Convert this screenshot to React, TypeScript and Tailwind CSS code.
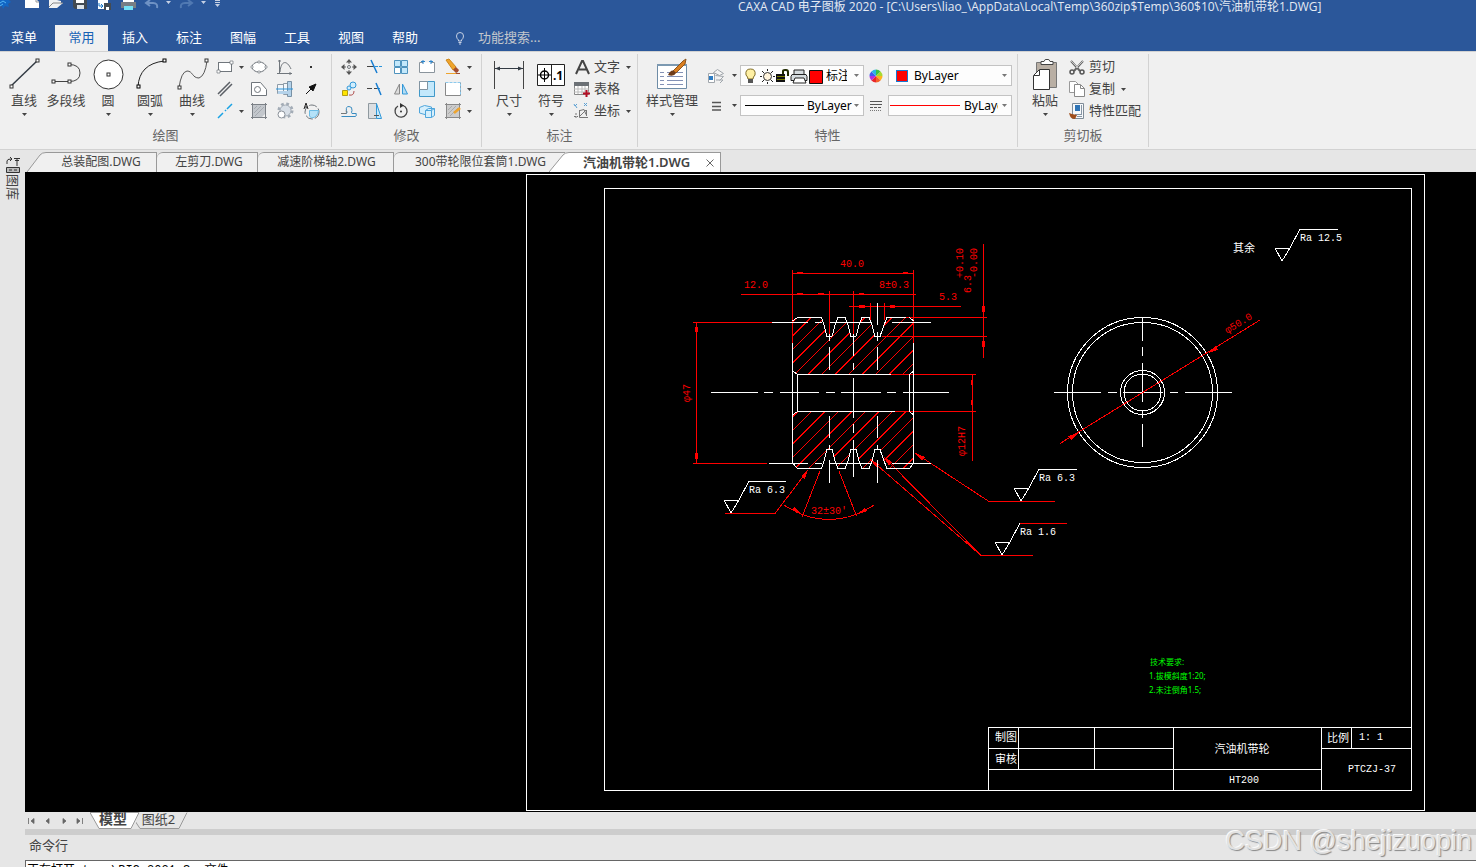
import React from "react";

type Kids = { children?: React.ReactNode };

const Ico = ({ children, w = 20, h = 20 }: Kids & { w?: number; h?: number }) => (
  <svg width={w} height={h} viewBox={`0 0 ${w} ${h}`} fill="none" stroke="#70767c" strokeWidth="1" aria-hidden="true" className="block shrink-0">
    {children}
  </svg>
);

const Caret = ({ color = "#444" }: { color?: string }) => (
  <svg width="5" height="3" viewBox="0 0 5 3" aria-hidden="true" className="block shrink-0">
    <path d="M0 0h5L2.500 3z" fill={color} />
  </svg>
);

const node = (x: number, y: number, color = "#333") => (
  <rect x={x - 1.5} y={y - 1.5} width="3" height="3" fill="#fff" stroke={color} />
);

function Big({ label, width = "w-[42px]", caret = true, children }: Kids & { label: string; width?: string; caret?: boolean }) {
  return (
    <button type="button" className={`flex ${width} flex-col items-center`}>
      <span className="flex h-9 items-center justify-center">{children}</span>
      <span className="text-[13px] leading-4 whitespace-nowrap">{label}</span>
      <span className="flex h-3 items-center">{caret && <Caret />}</span>
    </button>
  );
}

function Tool({ label, caret = false, children }: Kids & { label: string; caret?: boolean }) {
  return (
    <button type="button" aria-label={label} className="flex h-[22px] items-center gap-1 pl-[2px]">
      {children}
      {caret && <Caret />}
    </button>
  );
}

function Row({ label, caret = false, children }: Kids & { label: string; caret?: boolean }) {
  return (
    <button type="button" className="flex h-[22px] items-center gap-[2px] whitespace-nowrap text-[13px] leading-4">
      {children}
      <span className="pr-1 pb-[2px]">{label}</span>
      {caret && <Caret />}
    </button>
  );
}

function Group({ title, pad, children }: Kids & { title: string; pad: string }) {
  return (
    <section className="my-[2px] flex shrink-0 flex-col border-r border-[#d2d2d2] pt-[2px] text-[#444]">
      <div className={`flex h-[66px] ${pad}`}>{children}</div>
      <h2 className="mt-1 text-center text-[13px] leading-[18px] text-[#666]">{title}</h2>
    </section>
  );
}

function Combo({ label, value, lead, selectClass }: { label: string; value: string; lead: React.ReactNode; selectClass: string }) {
  return (
    <div className="flex h-[21px] w-[124px] items-center border border-[#c3c3c3] bg-[#fdfdfd]">
      {lead}
      <select aria-label={label} className={`${selectClass} min-w-0 appearance-none overflow-hidden bg-transparent text-[12px] leading-[19px] text-black outline-none`}>
        <option>{value}</option>
      </select>
      <span className="ml-auto pr-1"><Caret color="#777" /></span>
    </div>
  );
}

function TitleIcons() {
  return (
    <svg width="225" height="12" viewBox="0 0 225 12" fill="none" aria-hidden="true" className="block shrink-0">
      <path d="M0 0h9l2 2-3 2 1 3-4-1-2 3-1-3H0z" fill="#1266c4" />
      <path d="M0 3l3-2 3 2M0 6l3-2" stroke="#56b5f5" />
      <path d="M25 0h12l2 2v6H25z" fill="#fff" /><path d="M36 0v2h3" stroke="#999" />
      <path d="M49 0h8l4 1v2h2l-6 5h-8z" fill="#f2f2f2" /><path d="M49 7l4-4h10" stroke="#888" />
      <path d="M73 0h14v9H75l-2-2z" fill="#444b52" /><path d="M76 0h8v3h-8z" fill="#fff" /><path d="M77 5h7v4h-7z" fill="#dfe5ea" />
      <path d="M98 0h10v9H98z" fill="#fff" /><path d="M99 3v3h4m-2-2 2 2-2 2" stroke="#1777c9" /><path d="M104 3h7v7h-7z" fill="#444b52" /><path d="M106 7h3v3h-3z" fill="#fff" />
      <path d="M123 0h11v3h-11z" fill="#fff" /><path d="M121 2h15v6h-15z" fill="#777e84" /><path d="M124 6h9v4h-9z" fill="#74e1f5" />
      <path d="M150 0l-4 3 4 3M147 3h6q5 0 4 5" stroke="#6f92c4" strokeWidth="2" />
      <path d="M166 1h5l-2.500 3zM201 1h5l-2.500 3z" fill="#c5d0e4" />
      <path d="M188 0l4 3-4 3M191 3h-6q-5 0-4 5" stroke="#5079b2" strokeWidth="2" />
      <path d="M215 .5h5M215 2.500h5" stroke="#c5d0e4" /><path d="M215 4h5l-2.500 3z" fill="#c5d0e4" />
    </svg>
  );
}

function DrawGroup() {
  return (
    <Group title="绘图" pad="pl-[3px] pr-[6px]">
      <Big label="直线"><Ico w={34} h={32}><path d="M4 28L30 3" stroke="#333b44" strokeWidth="1.500" />{node(4.5, 28.5)}{node(30.5, 2.5)}</Ico></Big>
      <Big label="多段线" caret={false}><Ico w={34} h={32}><path d="M4 23.500h16q11 0 11-8.500t-11-8.500" stroke="#444" />{node(4.5, 23.5)}{node(20.5, 23.5)}{node(20.5, 6.5)}</Ico></Big>
      <Big label="圆"><Ico w={32} h={32}><circle cx="16.500" cy="16.500" r="14.500" fill="#fff" stroke="#333" />{node(16.5, 16.5)}</Ico></Big>
      <Big label="圆弧"><Ico w={34} h={32}><path d="M5 29Q6 6 31 3" stroke="#222" />{node(5.5, 28.5, "#000")}{node(31.5, 2.5, "#000")}</Ico></Big>
      <Big label="曲线"><Ico w={34} h={32}><path d="M4 30Q6 14 12 13C18 13 17 20 24 20Q30 18 32 3" stroke="#555" />{node(4.5, 29.5)}{node(31.5, 2.5)}</Ico></Big>
      <div className="grid grid-cols-[34px_26px_26px_26px] grid-rows-3">
        <Tool label="矩形" caret><Ico><rect x="3.500" y="5.500" width="13" height="9" fill="#fff" /><path d="M2 13h3v3H2zM15 4h3v3h-3z" fill="#fff" strokeWidth=".7" /></Ico></Tool>
        <Tool label="椭圆"><Ico><ellipse cx="10" cy="10" rx="7" ry="5" fill="#fff" /><path d="M9 4h2v2H9zM9 14h2v2H9zM2 9h2v2H2zM16 9h2v2h-2z" fill="#fff" strokeWidth=".6" /></Ico></Tool>
        <Tool label="公式曲线"><Ico><path d="M4.500 3v13.500H17M2 16.500h3M3 4h3M15 15v3M5 15c1-12 7-12 11-3" /></Ico></Tool>
        <Tool label="点"><Ico><path d="M9 9h2v2H9z" fill="#333" stroke="none" /></Ico></Tool>
        <Tool label="平行线"><Ico><path d="M3 15L15 3M5 17L17 5" stroke="#5a5f65" strokeWidth="1.500" /></Ico></Tool>
        <Tool label="局部放大"><Ico><path d="M2.500 3.500h9l6 7v6h-15z" fill="#fff" /><circle cx="8.500" cy="10.500" r="3" /></Ico></Tool>
        <Tool label="轴"><Ico><path d="M2.500 5.500h6v9h-6zM8.500 4.500h4v11h-4z" fill="#f2f7fb" stroke="#8d9ba7" /><path d="M12.500 2.500h4v15h-4z" fill="#b4d2ea" stroke="#7891a5" /><path d="M3 12h13v3H3z" fill="#b4d2ea" stroke="none" /><path d="M1 10h17" stroke="#2994dc" /></Ico></Tool>
        <Tool label="箭头"><Ico><path d="M5 15l5-5" stroke="#111" /><path d="M15 5l-7 3 4 4z" fill="#111" stroke="#111" /></Ico></Tool>
        <Tool label="构造线" caret><Ico><path d="M3 17L8 12M10 10l1-1M12 8l5-5" stroke="#19a2e4" strokeWidth="1.500" /></Ico></Tool>
        <Tool label="剖面线"><Ico><path d="M4 4h12v9l-3 3H4z" fill="#c3c7cc" stroke="none" /><path d="M2 3.500h16M2 16.500h16M3.500 2v16M16.500 2v16" stroke="#7b8086" /><path d="M5 8l3-3M5 12l7-7M6 15l9-9" stroke="#a4a9af" /></Ico></Tool>
        <Tool label="齿轮"><Ico><circle cx="10.500" cy="9.500" r="6.500" stroke="#a3acb6" strokeWidth="3" strokeDasharray="2.600 2.500" /><circle cx="10.500" cy="9.500" r="5.500" fill="#d8dfe7" stroke="#a3acb6" /><circle cx="6.500" cy="13.500" r="3.500" fill="#fff" stroke="#8a9199" /></Ico></Tool>
        <Tool label="文字圆弧"><Ico><circle cx="11" cy="11" r="7" strokeDasharray="8 2" /><path d="M8.500 9.500h9q-1 7-7 7.500l-2-2z" fill="#b5e2f8" stroke="#6bbce5" /><path d="M3 8l2-6 2 6M4 6h2" stroke="#222" /></Ico></Tool>
      </div>
    </Group>
  );
}

function ModifyGroup() {
  const gold = "#efa42c";
  return (
    <Group title="修改" pad="pl-[5px] pr-1">
      <div className="grid grid-cols-[26px_26px_26px_26px_36px] grid-rows-3">
        <Tool label="平移"><Ico><circle cx="10" cy="10" r="1.500" /><path d="M10 4v3M10 13v3M4 10h3M13 10h3" stroke="#666" /><path d="M10 2l3 3.500H7zM10 18l3-3.500H7zM2 10l3.500-3v6zM18 10l-3.500-3v6z" fill="#555" stroke="none" /></Ico></Tool>
        <Tool label="裁剪"><Ico><path d="M2 9.500h7" stroke="#444" /><path d="M10 9.500h8" stroke="#2994dc" strokeDasharray="3 1" /><path d="M6 3l6 13" stroke="#167cd1" strokeWidth="1.500" /></Ico></Tool>
        <Tool label="阵列"><Ico><path d="M3.500 3.500h6v6h-6zM10.500 3.500h6v6h-6zM10.500 10.500h6v6h-6z" fill="#c3e8fb" stroke="#4f93bd" /><path d="M3.500 10.500h6v6h-6z" fill="#fff" stroke="#4f93bd" /></Ico></Tool>
        <Tool label="打断"><Ico><path d="M6 5.500H2.500v10h15v-10H14" fill="#fff" stroke="#8a949c" /><path d="M6 3v4M14 3v4M4 4.500h4M12 4.500h4" stroke="#2d85cc" /></Ico></Tool>
        <Tool label="删除" caret><Ico><path d="M3 3l3-1 7 8-3 3z" fill={gold} stroke="#cc861a" /><path d="M10 13l3-3 3 3q-1 3-3 3z" fill="#a34e31" stroke="none" /><path d="M3 16.500h10" stroke={gold} /><path d="M13 16.500h4" stroke="#a34e31" /></Ico></Tool>
        <Tool label="复制对象"><Ico><path d="M3.500 11.500h5v5h-5z" fill="#ffe400" stroke="#b59e14" /><circle cx="14" cy="6" r="3" fill="#d1edfc" stroke="#3298d8" /><circle cx="10" cy="9" r="2" fill="#d1edfc" stroke="#3298d8" /><path d="M10 16q5 1 5-4" stroke="#b05050" /></Ico></Tool>
        <Tool label="延伸"><Ico><path d="M2 9.500h5M9 9.500h3" stroke="#444" /><path d="M12 9.500h3" stroke="#2994dc" /><path d="M11 4l5 12" stroke="#167cd1" strokeWidth="1.500" /></Ico></Tool>
        <Tool label="镜像"><Ico><path d="M8.500 5v10h-5z" fill="#ddd" stroke="#888" /><path d="M11.500 5v10h5z" fill="#b3dcf3" stroke="#3298d8" /></Ico></Tool>
        <Tool label="缩放"><Ico><path d="M2.500 2.500h15v15h-15z" fill="#c3e8fb" stroke="#4199c9" /><path d="M2.500 2.500h8v8h-8z" fill="#fff" stroke="#8293a0" /></Ico></Tool>
        <Tool label="选区" caret><Ico><path d="M2.500 3.500v13h15v-13" fill="#fff" stroke="#888" /><path d="M2.500 3.500h15v13" stroke="#8cc9ec" strokeDasharray="3 1" /></Ico></Tool>
        <Tool label="偏移"><Ico><path d="M2.500 12.500h5q1-1 0-3-1-4 2.500-4t3 4q-1 2 0 3h4.500" stroke="#398cc1" /><path d="M2.500 15.500h14q2-1.500 0-3" stroke="#398cc1" /><path d="M2 12.500h5q1-1 0-3" stroke="#777" /></Ico></Tool>
        <Tool label="拉伸"><Ico><path d="M3.500 2.500h8v15h-8z" fill="#dcdfe2" stroke="#8f999f" /><path d="M11.500 2.500l5 15h-5z" fill="#c3e8fb" stroke="#3298d8" /><path d="M9 14.500h5" stroke="#555" /></Ico></Tool>
        <Tool label="旋转"><Ico><path d="M12 4.500A6 6 0 1 1 7 5" stroke="#444" strokeWidth="1.300" /><path d="M9 2v5l4-2.500z" fill="#333" stroke="none" /><circle cx="10" cy="10.500" r="1" fill="#333" stroke="none" /></Ico></Tool>
        <Tool label="三维"><Ico><path d="M2.500 6.500l5-2 7 1.500v6l-5 2-7-2z" fill="#d6effc" stroke="#4fa6dc" /><path d="M8.500 9.500l3-2h6v7l-3 2h-6zM8.500 9.500h6l3-2M14.500 9.500v7" fill="#d6effc" stroke="#4fa6dc" /></Ico></Tool>
        <Tool label="编辑填充" caret><Ico><path d="M4 4h12v12H4z" fill="#ccc" stroke="none" /><path d="M2 3.500h16M2 16.500h16M3.500 2v16M16.500 2v16" stroke="#888" /><path d="M5 9l4-4M5 13l8-8M7 15l8-8" stroke="#aaa" /><path d="M11 12l6-5" stroke={gold} strokeWidth="2.500" /></Ico></Tool>
      </div>
    </Group>
  );
}

function AnnotateGroup() {
  return (
    <Group title="标注" pad="pl-[6px] pr-[6px]">
      <Big label="尺寸">
        <Ico w={32} h={32}><path d="M1.500 3v28M30.500 3v28" stroke="#444" /><path d="M2 10.500h28" stroke="#333b44" /><path d="M2 10.500l5-2v4zM30 10.500l-5-2v4z" fill="#333b44" stroke="none" /></Ico>
      </Big>
      <Big label="符号">
        <Ico w={30} h={32}>
          <path d="M1.500 6.500h27v21h-27zM15.500 6.500v21" fill="#fff" stroke="#222" /><circle cx="8.500" cy="17" r="4" stroke="#000" strokeWidth="1.500" /><path d="M2 17h13M8.500 10v14" stroke="#000" />
          <text x="17" y="22" fontSize="12" fontWeight="700" fill="#000" stroke="none">.1</text>
        </Ico>
      </Big>
      <div className="grid grid-rows-3">
        <Row label="文字" caret><Ico><path d="M4 17L10 4h1L17 17M7 12.500h8" stroke="#444" strokeWidth="2" /></Ico></Row>
        <Row label="表格"><Ico><path d="M2.500 3.500h14v12h-14z" fill="#fff" stroke="#888" /><path d="M2 3h15v4H2z" fill="#6b7075" stroke="none" /><path d="M2 10h15M2 13h15M6 7v8M10 7v8M13 7v8" stroke="#bbb" /><path d="M14.500 11v7M11 14.500h7" stroke="#b40f25" strokeWidth="2" /></Ico></Row>
        <Row label="坐标" caret><Ico><path d="M7.500 9v7.500H16M14.500 9v6M8 15l6-6M8 9.500l4-1 2 5" stroke="#777" /><path d="M3 4l2 3M2 3l1 2 2-2M12 2l3 3m0-3-3 3" stroke="#5a9fd2" /><path d="M2 15.500h4M4 12v6" stroke="#777" strokeDasharray="2 1" /></Ico></Row>
      </div>
    </Group>
  );
}

function LayerLead() {
  return (
    <svg width="83" height="19" viewBox="0 0 83 19" fill="none" stroke="#222" aria-hidden="true" className="block shrink-0">
      <path d="M7 13q0-2-2-4-1-6 4.500-6T14 9q-2 2-2 4z" fill="#fff0a4" stroke="#806d27" /><path d="M7 13h5v4H7z" fill="#555" stroke="none" />
      <circle cx="26.500" cy="10.500" r="4" fill="#fff4dc" stroke="#333" /><path d="M26.500 3v2M26.500 16v2M19 10.500h2M32 10.500h2M21 5l2 2M30 14l2 2M32 5l-2 2M23 14l-2 2" />
      <path d="M35 8h9v8h-9z" fill="#111" stroke="none" /><path d="M36 10.500h8M36 13.500h8" stroke="#777b00" /><path d="M42 8V5q0-1 2-1h1q2 0 2 2v4" strokeWidth="2" stroke="#222b00" />
      <path d="M53 8V4h10v4M51 8.500h14l1 2v4H50v-4z" fill="#d4dade" /><path d="M54 12h9l2 5H52z" fill="#fff" />
      <path d="M68.500 4.500h13v13h-13z" fill="#f00" stroke="#111" />
    </svg>
  );
}

function PropertiesGroup() {
  const slices = ["#ffb31a", "#f5622a", "#e8262a", "#b32fe0", "#3f5cf0", "#2bb4e8", "#39c14a", "#a7d930"];
  return (
    <Group title="特性" pad="pl-1 pr-[5px]">
      <Big label="样式管理" width="w-[60px]">
        <Ico w={34} h={32}>
          <path d="M2.500 6.500h29v24h-29z" fill="#fff" stroke="#6e8ca6" /><path d="M2 6h30v2H2z" fill="#7c99b1" stroke="none" />
          <path d="M5 14.500h4M5 18.500h4M5 22.500h4M5 26.500h4M12 14.500h16M12 18.500h16M12 22.500h16M12 26.500h16" stroke="#8391b5" />
          <path d="M18 13L28 3l3-2-1 5-9 9z" fill="#d97e20" stroke="#8b541d" /><path d="M13 17q3-6 6-4l2 2q-2 4-8 2z" fill="#6e3b18" stroke="none" />
        </Ico>
      </Big>
      <div className="flex w-[38px] flex-col gap-[9px] pt-[9px] pl-1">
        <button type="button" aria-label="图层" className="flex h-[21px] items-center gap-1"><Ico w={22}><path d="M7.500 6.500l4-3 6 4-4 2zM9.500 9.500l8 1-4 4M10 14l7 0-3 3" fill="#f4f4f4" stroke="#a0a6ac" /><path d="M2.500 7.500h6v9h-6z" fill="#fff" stroke="#a0a6ac" /><path d="M3 10h4v4H3z" fill="#2f7dc4" stroke="none" /></Ico><Caret /></button>
        <button type="button" aria-label="线宽样式" className="flex h-[21px] items-center gap-1"><Ico w={22}><path d="M6 6.500h9M6 10.500h9M6 14h9" stroke="#555" strokeWidth="1.300" /></Ico><Caret /></button>
      </div>
      <div className="flex flex-col gap-[9px] pt-[9px]">
        <Combo label="图层" value="标注层" lead={<LayerLead />} selectClass="ml-[2px] w-[21px]" />
        <Combo label="线型" value="ByLayer" lead={<span className="ml-1 h-px w-[59px] shrink-0 bg-black" />} selectClass="ml-[3px] w-[45px]" />
      </div>
      <div className="flex w-6 flex-col items-center gap-[9px] pt-[9px]">
        <span className="flex h-[21px] items-center"><Ico w={14} h={14}>{slices.map((c, i) => {
          const a = (i * Math.PI) / 4, b = ((i + 1) * Math.PI) / 4;
          return <path key={c} d={`M7 7L${7 + 6.5 * Math.cos(a)} ${7 + 6.5 * Math.sin(a)}A6.500 6.500 0 0 1 ${7 + 6.5 * Math.cos(b)} ${7 + 6.5 * Math.sin(b)}z`} fill={c} stroke="none" />;
        })}</Ico></span>
        <span className="flex h-[21px] items-center"><Ico w={14} h={14}><path d="M1 2.500h12M1 5.500h12" stroke="#555" /><path d="M1 8.500h12" stroke="#555" strokeDasharray="3 1" /><path d="M1 11.500h12" stroke="#777" strokeDasharray="1 1" /></Ico></span>
      </div>
      <div className="flex flex-col gap-[9px] pt-[9px]">
        <Combo label="颜色" value="ByLayer" lead={<span className="ml-[7px] size-3 shrink-0 border border-[#1777d1] bg-[#f00]" />} selectClass="ml-[6px] w-20" />
        <Combo label="线宽" value="ByLayer" lead={<span className="ml-px h-px w-[70px] shrink-0 bg-[#f00]" />} selectClass="ml-1 w-[34px]" />
      </div>
    </Group>
  );
}

function ClipboardGroup() {
  return (
    <Group title="剪切板" pad="pl-[5px] pr-[3px]">
      <Big label="粘贴" width="w-[44px]">
        <Ico w={28} h={32}><path d="M5.500 4.500h20v25h-20z" fill="#b9afa4" stroke="#777" /><path d="M10 6.500V3.500h3q1-3 3-2 2-1 3 2h3v3z" fill="#fff" stroke="#444" /><path d="M2.500 17.500l6-6h10v20h-16z" fill="#fff" stroke="#333" /><path d="M8.500 12v5.500H3" stroke="#333" /></Ico>
      </Big>
      <div className="grid grid-rows-3">
        <Row label="剪切"><Ico><path d="M4 4l9 10M16 4L7 14" stroke="#666" strokeWidth="2" /><path d="M4 4l7 7M16 4l-7 7" stroke="#ddd" strokeWidth=".8" /><circle cx="5" cy="15" r="2" stroke="#555" strokeWidth="1.500" /><circle cx="15" cy="15" r="2" stroke="#555" strokeWidth="1.500" /></Ico></Row>
        <Row label="复制" caret><Ico><path d="M2.500 2.500h6l3 3v8h-9z" fill="#fff" stroke="#999" /><path d="M7.500 5.500h6l4 4v8h-10z" fill="#fff" stroke="#888" /><path d="M13.500 6v3.500h4" stroke="#888" /></Ico></Row>
        <Row label="特性匹配"><Ico><path d="M5.500 2.500h11v15h-11z" fill="#f7f9fb" stroke="#7f8c98" /><path d="M8 4h5v6H8z" fill="#2f74b6" stroke="none" /><path d="M14.500 4v9M8 13.500h7M10 15.500h5" stroke="#8796a5" /><path d="M2 12l3 1 5 1-2 4q-4 0-5-3z" fill="#9f4e1c" stroke="none" /></Ico></Row>
      </div>
    </Group>
  );
}

const profile = "821.500,317.500 824,325 827,336.500 832,336.500 835,325 838,317.500 845,317.500 848,325 851,336.500 856,336.500 859,325 862,317.500 869,317.500 872,325 875,336.500 880,336.500 884,325 887,317.500";
const profileLow = "821.500,468.500 824,461 827,449.500 832,449.500 835,461 838,468.500 845,468.500 848,461 851,449.500 856,449.500 859,461 862,468.500 869,468.500 872,461 875,449.500 880,449.500 884,461 887,468.500";
const hatch = Array.from({ length: 22 }, (_, i) => 1115 + i * 13.5);

function Rough({ x, y, end, value, redTop = false }: { x: number; y: number; end: number; value: string; redTop?: boolean }) {
  return (
    <g>
      <path d={`M${x} ${y}L${x - 7} ${y - 13}h15L${x} ${y}M${x + 8} ${y - 13}L${x + 18} ${y - 32}`} />
      <path d={`M${x + 18} ${y - 31.5}H${end}`} stroke={redTop ? "#f00" : "#fff"} />
      <text x={x + 18} y={y - 20} className="fill-white text-[10px]" stroke="none">{value}</text>
    </g>
  );
}

function Drawing() {
  return (
    <svg viewBox="25 172 1451 640" className="block h-auto w-full shrink-0 bg-black font-['Liberation_Mono','Noto_Sans_CJK_SC',monospace]" fill="none" stroke="#fff" strokeWidth="1" shapeRendering="crispEdges" role="img" aria-label="汽油机带轮零件图">
      <defs>
        <clipPath id="upper"><polygon points={`793,374 793,321 797,317.500 ${profile} 909,317.500 913,321 913,374`} /></clipPath>
        <clipPath id="lower"><polygon points={`793,412 793,463 797,468.500 ${profileLow} 909,468.500 913,463 913,412`} /></clipPath>
      </defs>
      <rect x="526.500" y="174.500" width="898" height="636" />
      <rect x="604.500" y="188.500" width="807" height="602" />

      <g stroke="#f00">
        <g clipPath="url(#upper)">{hatch.map((c) => <path key={c} d={`M${c - 375} 375L${c - 315} 315`} />)}</g>
        <g clipPath="url(#lower)">{hatch.map((c) => <path key={c} d={`M${c - 470} 470L${c - 410} 410`} />)}</g>
        <path d="M792.500 270V343M913.500 270V343M792 273.500H914M741 294.500H916M829.500 291V334M853.500 291V334M849 306.500H961M870.500 303V320M884.500 303V320" />
        <path d="M906 317.500H987M882 336.500H987M983.500 244V358M693 322.500H772M696.500 322V463M693 463.500H767M891 374.500H976M895 411.500H976M972.500 375V461" />
        <g fill="#f00" stroke="none">
          <path d="M797 272h6v2h-6zM903 272h5v2h-5zM797 293h6v2h-6zM818 293h6v2h-6zM859 293h5v2h-5zM859 305h6v3h-6zM890 305h5v3h-5zM982 306h3v6h-3zM982 341h3v6h-3zM695 327h3v5h-3zM695 453h3v6h-3zM971 380h2v5h-2zM971 400h2v5h-2z" />
          <path d="M808 470l-3 9-4-3zM915 453l10 4-3 4zM870 459l9 5-3 3zM884 457l8 5-3 4zM802 515l-10-5 2-3zM856 515l9-7 2 3zM1080 432l-12 4 3 4zM1208 353l8-7 2 4z" />
        </g>
        <path d="M820 471L802 517M839 471L856.500 516M784 505Q806 519.500 829 519.500T874 505" />
        <path d="M725 513.500H775L808 470M1055 501.500H989L915 453M1033 555.500H981L884 457M981 555.500L870 459" />
      </g>

      <g>
        <path d="M792.500 343V463L797.500 468.500H822M913.500 343V463L909.500 468.500H887M792.500 321L797.500 317.500H822M887 317.500H906M909.500 317.500L913.500 321" />
        <polyline points={profile} /><polyline points={profileLow} />
        <path d="M891 374.500H797.500V411.500H895M909.500 374V412M792.500 371L797.500 374.500M913.500 371L909.500 374.500M797.500 411.500L792.500 415M909.500 411.500L913.500 415" />
        <path d="M772 322.500H808M815 322.500H822M830 322.500H870M892 322.500H931M769 463.500H808M815 463.500H822M830 463.500H870M892 463.500H931" />
        <path d="M711 392.500H758M764 392.500H773M780 392.500H819M826 392.500H835M841 392.500H881M887 392.500H896M903 392.500H949" />
        <path d="M829.500 334V341M829.500 347V370M829.500 416V438M829.500 445V450M829.500 460V483M853.500 334V356M853.500 363V370M853.500 378V418M853.500 424V433M853.500 440V477M877.500 303V325M877.500 332V341M877.500 347V370M877.500 416V438M877.500 445V450M877.500 460V483" />
        <circle cx="1142.500" cy="392.500" r="75" /><circle cx="1142.500" cy="392.500" r="70" /><circle cx="1142.500" cy="392.500" r="22" /><circle cx="1142.500" cy="392.500" r="18.500" />
        <path d="M1054 392.500H1101M1108 392.500H1117M1123 392.500H1163M1170 392.500H1178M1185 392.500H1232M1142.500 318V341M1142.500 347V356M1142.500 363V402M1142.500 410V418M1142.500 424V447" />
      </g>
      <path d="M1060 443.500L1260 320" stroke="#f00" />

      <Rough x={731} y={513} end={786} value="Ra 6.3" />
      <Rough x={1021} y={501} end={1077} value="Ra 6.3" />
      <Rough x={1002} y={555} end={1067} value="Ra 1.6" redTop />
      <Rough x={1282} y={261} end={1338} value="Ra 12.5" />

      <g stroke="none" className="fill-[#f00] text-[10px]" textAnchor="middle">
        <text x="852" y="267">40.0</text>
        <text x="756" y="288">12.0</text>
        <text x="894" y="288">8±0.3</text>
        <text x="948" y="300">5.3</text>
        <text x="829" y="514">32±30'</text>
        <text transform="translate(690 393) rotate(-90)">φ47</text>
        <text transform="translate(965 441) rotate(-90)">φ12H7</text>
        <text transform="translate(971 284) rotate(-90)">6.3</text>
        <text transform="translate(963 263) rotate(-90)">+0.10</text>
        <text transform="translate(977 263) rotate(-90)">-0.00</text>
        <text transform="translate(1240 326) rotate(-31)">φ50.0</text>
      </g>

      <g stroke="none" className="fill-[#0f0] font-['Noto_Sans','Noto_Sans_CJK_SC',sans-serif] text-[8px]">
        <text x="1150" y="665">技术要求:</text>
        <text x="1149" y="679">1.拔模斜度1:20;</text>
        <text x="1149" y="693">2.未注倒角1.5;</text>
      </g>

      <path d="M988.500 790V727.500H1411M988 748.500H1173M1321 748.500H1411M988 769.500H1321M1018.500 727V769M1094.500 727V769M1173.500 727V790M1321.500 727V790M1351.500 727V748" />
      <g stroke="none" className="fill-white text-[11px]" textAnchor="middle">
        <text x="1244" y="252">其余</text>
        <text x="1006" y="741">制图</text>
        <text x="1006" y="763">审核</text>
        <text x="1242" y="753">汽油机带轮</text>
        <text x="1338" y="742">比例</text>
        <g className="text-[10px]">
          <text x="1371" y="740">1: 1</text>
          <text x="1244" y="783">HT200</text>
          <text x="1372" y="772">PTCZJ-37</text>
        </g>
      </g>
    </svg>
  );
}

const menus = ["插入", "标注", "图幅", "工具", "视图", "帮助"];

export default function App() {
  return (
    <div className="relative flex h-screen flex-col overflow-hidden bg-[#e6e6e6] font-['Noto_Sans','Noto_Sans_CJK_SC',sans-serif] text-[#444]">
      <header className="shrink-0 bg-[#2b579a] text-white">
        <div className="flex h-[25px] items-start whitespace-nowrap">
          <TitleIcons />
          <h1 className="pl-[513px] font-['Open_Sans','Noto_Sans_CJK_SC',sans-serif] text-[12px] leading-[14px] text-[#e4eaf3]">CAXA CAD 电子图板 2020 - [C:\Users\liao_\AppData\Local\Temp\360zip$Temp\360$10\汽油机带轮1.DWG]</h1>
        </div>
        <nav className="flex h-[26px] text-[13px] leading-5">
          <button type="button" className="w-[55px] pr-[7px] pb-[2px]">菜单</button>
          <button type="button" className="w-[53px] bg-[#f0f0f0] pb-[2px] text-[#1862b5]">常用</button>
          {menus.map((m) => <button type="button" key={m} className="w-[54px] pb-[2px]">{m}</button>)}
          <label className="ml-[22px] flex items-center gap-3">
            <svg width="12" height="14" viewBox="0 0 12 14" fill="none" stroke="#c5d0e4" aria-hidden="true"><path d="M4.500 10V9Q2.500 7.500 2.500 5a3.500 3.500 0 0 1 7 0q0 2.500-2 4v1z" /><path d="M4.500 11.500h3M5 13h2" /></svg>
            <input type="text" aria-label="功能搜索" placeholder="功能搜索..." className="w-40 bg-transparent pb-[2px] text-[13px] leading-5 outline-none placeholder:text-[#c3c7cd]" />
          </label>
        </nav>
      </header>

      <div className="flex h-[99px] shrink-0 border-t border-b border-[#d2d2d2] bg-[#f0f0f0]">
        <DrawGroup />
        <ModifyGroup />
        <AnnotateGroup />
        <PropertiesGroup />
        <ClipboardGroup />
      </div>

      <div className="flex min-h-0 flex-1">
        <aside className="flex w-[25px] shrink-0 flex-col items-center pt-[6px]">
          <button type="button" className="flex flex-col items-center text-[13px]">
            <Ico w={14} h={18}><path d="M1 8V5q0-2 4-2M4 1l2 2-2 2M8 2.500h6M9 4.500h4M11 3v7" stroke="#333" /><path d="M.5 11.500h13v5H.500zM3 14h3M8 14h3" fill="#bbb" stroke="#333" /></Ico>
            <span className="leading-4 [writing-mode:vertical-rl] [text-orientation:sideways]">图库</span>
          </button>
        </aside>
        <main className="flex min-w-0 flex-1 flex-col">
          <div className="flex h-[22px] shrink-0 items-end text-[12px] leading-4 whitespace-nowrap">
            <svg width="20" height="20" viewBox="0 0 20 20" className="ml-px block shrink-0" aria-hidden="true"><path d="M1 20Q5 16 10 8T20 .5V20z" fill="#f0f0f0" /><path d="M1 20L14 3q2-2.500 6-2.500" fill="none" stroke="#999" /></svg>
            <button type="button" className="h-5 w-[111px] border-t border-r border-[#999] bg-[#f0f0f0] pb-[2px]">总装配图.DWG</button>
            <button type="button" className="h-5 w-[101px] rounded-tl-md border-t border-r border-[#999] bg-[#f0f0f0] pb-[2px] pl-1">左剪刀.DWG</button>
            <button type="button" className="h-5 w-[136px] rounded-tl-md border-t border-r border-[#999] bg-[#f0f0f0] pb-[2px] pl-[2px]">减速阶梯轴2.DWG</button>
            <button type="button" className="h-5 w-[171px] rounded-tl-md border-t border-[#999] bg-[#f0f0f0] pb-[2px] pl-[2px]">300带轮限位套筒1.DWG</button>
            <div className="-ml-4 flex h-5">
              <svg width="20" height="20" viewBox="0 0 20 20" className="block shrink-0" aria-hidden="true"><path d="M0 20L14 3q2-2.500 6-2.500V20z" fill="#fff" /><path d="M0 20L14 3q2-2.500 6-2.500" fill="none" stroke="#999" /></svg>
              <div className="flex w-[152px] items-center border-t border-r border-[#999] bg-white pl-[14px]">
                <button type="button" className="pb-[2px] text-[13px] font-semibold">汽油机带轮1.DWG</button>
                <button type="button" aria-label="关闭" className="ml-auto pr-[6px]"><svg width="8" height="8" viewBox="0 0 8 8" stroke="#666" aria-hidden="true"><path d="M.5.5l7 7M7.500.5l-7 7" /></svg></button>
              </div>
            </div>
          </div>

          <Drawing />

          <div className="flex h-[17px] shrink-0 text-[13px] leading-[14px]">
            <svg width="65" height="17" viewBox="0 0 65 17" fill="#666" stroke="#666" aria-hidden="true" className="block shrink-0"><path d="M3.500 6v6M9 6.500L6 9l3 2.500zM24 6.500L21 9l3 2.500zM38 6.500L41 9l-3 2.500zM52 6.500L55 9l-3 2.500zM57.500 6v6" strokeWidth=".8" /></svg>
            <button type="button" className="relative w-[46px] pb-1 text-[14px] font-semibold">
              <svg width="50" height="17" viewBox="0 0 50 17" aria-hidden="true" className="absolute top-0 left-0"><path d="M0 .5L9 16.500H41L49 .5z" fill="#fff" stroke="#999" /></svg>
              <span className="relative">模型</span>
            </button>
            <button type="button" className="relative w-[45px] pb-1">
              <svg width="52" height="17" viewBox="0 0 52 17" aria-hidden="true" className="absolute top-0 left-0" fill="none"><path d="M-1 9L4 16.500H43L51 .5" stroke="#999" /></svg>
              <span className="relative">图纸2</span>
            </button>
          </div>
          <div className="h-[6px] shrink-0 bg-[#cdcdcd]" />
          <h2 className="h-[25px] shrink-0 pl-1 text-[13px] leading-5">命令行</h2>
          <div className="min-h-0 flex-1 overflow-hidden border-t border-l border-[#666] bg-white">
            <p className="pt-[2px] pl-px font-['Liberation_Mono','Noto_Sans_CJK_SC',monospace] text-[12px] leading-4 whitespace-pre text-black">正在打开 temp\BIG 2021 S~ 文件</p>
          </div>
        </main>
      </div>

      <div className="pointer-events-none absolute right-1 bottom-[10px] font-['Liberation_Sans',sans-serif] text-[27px] leading-8 text-[#e2e2e2] [text-shadow:1px_1px_1px_#888,-1px_-1px_0_#fafafa]">CSDN @shejizuopin</div>
    </div>
  );
}
